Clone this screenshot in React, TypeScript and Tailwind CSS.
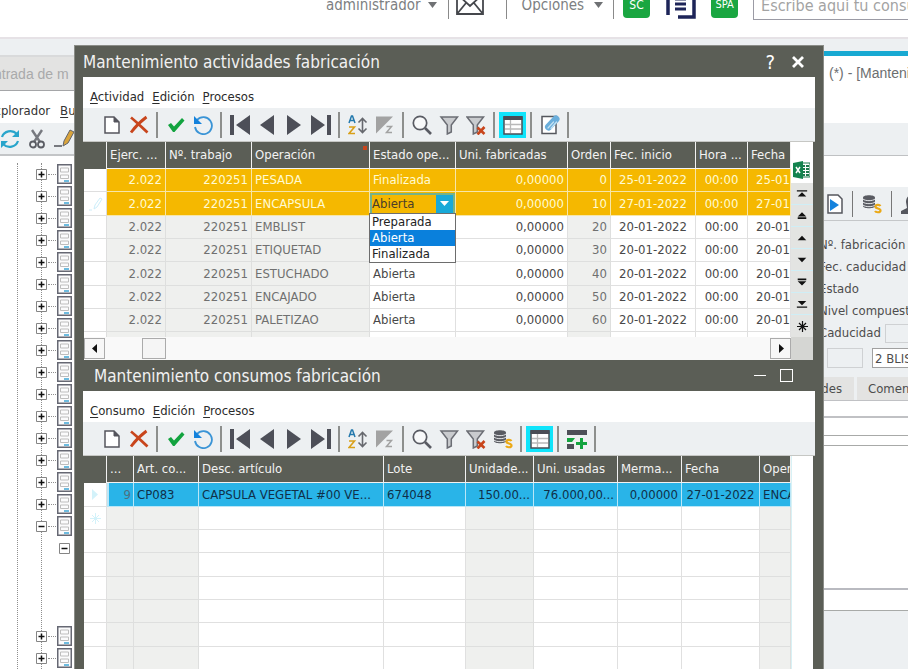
import type { ReactNode } from "react";

const UI = "font-['DejaVu_Sans_Condensed','DejaVu_Sans',sans-serif]";

/* ---------- icons ---------- */

function Svg({ children, w = 20, h = 20 }: { children: ReactNode; w?: number; h?: number }) {
  return (
    <svg width={w} height={h} viewBox={`0 0 ${w} ${h}`} fill="none" aria-hidden="true" className="shrink-0">
      {children}
    </svg>
  );
}

const icons = {
  nuevo: (
    <Svg>
      <path d="M3 2h9l5 5v11H3z" fill="#fff" stroke="#55555d" strokeWidth="1.500" />
      <path d="M12 2v5h5z" fill="#55555d" stroke="#55555d" />
    </Svg>
  ),
  borrar: (
    <Svg>
      <path d="M2 2.500c5 4 11 10 16.500 15M17.500 2C12 6 6 12 2 17.500" stroke="#c8451c" strokeWidth="2.800" />
    </Svg>
  ),
  aceptar: (
    <Svg>
      <path d="M2 10l3-2 3 3.500L16 3l2.500 2.500L8.500 17H7z" fill="#12a33f" />
    </Svg>
  ),
  deshacer: (
    <Svg>
      <path d="M4 5A8.500 8.500 0 1 1 2 12" stroke="#3a94d6" strokeWidth="1.800" />
      <path d="M1 1v8h8z" fill="#1482dc" />
    </Svg>
  ),
  primero: (
    <Svg>
      <path d="M0 0h4v20H0zM20 0v20L6 10z" fill="#4d4f58" />
    </Svg>
  ),
  anterior: (
    <Svg>
      <path d="M17 0v20L3 10z" fill="#4d4f58" />
    </Svg>
  ),
  siguiente: (
    <Svg>
      <path d="M3 0v20l14-10z" fill="#4d4f58" />
    </Svg>
  ),
  ultimo: (
    <Svg>
      <path d="M0 0v20l14-10zM16 0h4v20h-4z" fill="#4d4f58" />
    </Svg>
  ),
  ordenar: (
    <Svg>
      <path d="M1 8l2.500-7h1L7 8M2 5.500h4" stroke="#2479ad" strokeWidth="1.500" />
      <path d="M1 12h5.500L1 18.500h6" stroke="#d9a018" strokeWidth="1.600" />
      <path d="M14.500 4v13M10.500 7.500l4-4 4 4M10.500 13.500l4 4 4-4" stroke="#66686e" strokeWidth="1.600" />
    </Svg>
  ),
  sinOrden: (
    <Svg>
      <path d="M1 1.500h17L1 18.500z" fill="#a2a2a2" />
      <path d="M11.500 11.500h5l-5 6h5.500" stroke="#a2a2a2" strokeWidth="1.500" />
    </Svg>
  ),
  buscar: (
    <Svg>
      <circle cx="8" cy="8" r="6.700" fill="#f8f9fa" stroke="#595b63" strokeWidth="1.700" />
      <path d="M13 13l6 6" stroke="#595b63" strokeWidth="2.600" />
    </Svg>
  ),
  filtro: (
    <Svg>
      <path d="M2 2h16.500l-6.200 8v7l-4 2v-9z" fill="#c9cbce" stroke="#6b6d74" strokeWidth="1.500" />
    </Svg>
  ),
  quitarFiltro: (
    <Svg>
      <path d="M1 2h16.500l-6.200 8v7l-4 2v-9z" fill="#c9cbce" stroke="#6b6d74" strokeWidth="1.500" />
      <path d="M11.500 12.500l7 6.500M18.500 12l-7 7.500" stroke="#c8451c" strokeWidth="2.600" />
    </Svg>
  ),
  rejilla: (
    <Svg>
      <path d="M1 2h18v17H1z" fill="#fff" stroke="#4b4d55" strokeWidth="1.500" />
      <path d="M0.500 1h19v4h-19z" fill="#4b4d55" />
      <path d="M2 9.500h16M2 14h16M7.500 5v13" stroke="#b9b9b9" strokeWidth="1.300" />
    </Svg>
  ),
  adjuntar: (
    <Svg>
      <path d="M2 1.500h14v17H2z" fill="#fff" stroke="#55575e" strokeWidth="1.500" />
      <path d="M8.500 12L16 4" stroke="#6aaedb" strokeWidth="7" strokeLinecap="round" />
      <path d="M8 13l5.500-6M11 13.500L16.500 7" stroke="#c5e2f3" strokeWidth="1.200" strokeLinecap="round" />
    </Svg>
  ),
  costes: (
    <Svg>
      <path d="M1 3.500C1 0.500 13 0.500 13 3.500v8.500C13 15 1 15 1 12z" fill="#595b62" />
      <path d="M1 5c2 2.200 10 2.200 12 0M1 8c2 2.200 10 2.200 12 0M1 11c2 2.200 10 2.200 12 0" stroke="#e3e5e8" strokeWidth="1" />
      <path d="M18.500 12c-1-1.500-5-1.500-5 0.700 0 2.300 5 1.300 5 3.700 0 2.400-4.500 2.300-5.500 0.600" stroke="#eba916" strokeWidth="2.200" />
    </Svg>
  ),
  anadirFila: (
    <Svg>
      <path d="M0 1h20v5H0zM0 15h7v5H0z" fill="#4d4f58" />
      <path d="M0 9h8l-3 4H0zM9 13h4V9h3v4h4v3h-4v4h-3v-4H9z" fill="#12a33f" />
    </Svg>
  ),
};

type IconName = keyof typeof icons;

/* ---------- toolbar ---------- */

function Toolbar({ items, label }: { items: (IconName | "|")[]; label: string }) {
  return (
    <div role="toolbar" aria-label={label} className="flex h-[33px] items-center bg-[#edf0f2] pl-[15px]">
      {items.map((it, i) =>
        it === "|" ? (
          <span key={i} className="mx-1 h-[26px] w-0.5 bg-[#8d8f8d]" />
        ) : it === "rejilla" ? (
          <button key={i} aria-label={it} className="flex h-[26px] w-[27px] items-center justify-center bg-[#0fe4fb]">
            {icons[it]}
          </button>
        ) : (
          <button key={i} aria-label={it} className="flex h-[26px] w-[27px] items-center justify-center">
            {icons[it]}
          </button>
        ),
      )}
    </div>
  );
}

function MenuBar({ items }: { items: string[] }) {
  return (
    <nav className="flex h-[31px] items-center gap-2 bg-white pt-2 pl-[7px] text-[13px] text-[#2b2b2b]">
      {items.map((m) => (
        <button key={m} className="leading-4">
          <span className="underline underline-offset-2">{m[0]}</span>
          {m.slice(1)}
        </button>
      ))}
    </nav>
  );
}

/* ---------- activities grid ---------- */

type Row = [string, string, string, string, string, string, string, string, string];

const actividades: Row[] = [
  ["2.022", "220251", "PESADA", "Finalizada", "0,00000", "0", "25-01-2022", "00:00", "25-01"],
  ["2.022", "220251", "ENCAPSULA", "Abierta", "0,00000", "10", "27-01-2022", "00:00", "27-01"],
  ["2.022", "220251", "EMBLIST", "", "0,00000", "20", "20-01-2022", "00:00", "20-01"],
  ["2.022", "220251", "ETIQUETAD", "", "0,00000", "30", "20-01-2022", "00:00", "20-01"],
  ["2.022", "220251", "ESTUCHADO", "Abierta", "0,00000", "40", "20-01-2022", "00:00", "20-01"],
  ["2.022", "220251", "ENCAJADO", "Abierta", "0,00000", "50", "20-01-2022", "00:00", "20-01"],
  ["2.022", "220251", "PALETIZAO", "Abierta", "0,00000", "60", "20-01-2022", "00:00", "20-01"],
  ["", "", "", "", "", "", "", "", ""],
];

const colsA = [
  { t: "Ejerc. ...", w: "w-[59px]", a: "text-right pr-[3px]", ro: true },
  { t: "Nº. trabajo", w: "w-[86px]", a: "text-right pr-[3px]", ro: true },
  { t: "Operación", w: "w-[118px]", a: "text-left pl-[3px]", ro: true },
  { t: "Estado ope...", w: "w-[86px]", a: "text-left pl-[3px]", ro: false },
  { t: "Uni. fabricadas", w: "w-[112px]", a: "text-right pr-[3px]", ro: false },
  { t: "Orden", w: "w-[43px]", a: "text-right pr-[3px]", ro: true },
  { t: "Fec. inicio", w: "w-[85px]", a: "text-center", ro: false },
  { t: "Hora ...", w: "w-[52px]", a: "text-center", ro: false },
  { t: "Fecha", w: "", a: "text-left pl-2", ro: false },
];

function EstadoEditor() {
  return (
    <div className="relative flex h-[22px] w-[85px] items-stretch border-2 border-[#77b287] bg-[#f5b800]">
      <input aria-label="Estado operación" defaultValue="Abierta" className="min-w-0 flex-1 bg-transparent text-[13px] leading-4 text-[#4b3d2a] outline-none" />
      <button aria-label="Desplegar" className="flex w-[17px] items-center justify-center bg-[#18a9d8]">
        <svg width="9" height="5" viewBox="0 0 9 5" aria-hidden="true">
          <path d="M0 0h9L4.500 5z" fill="#fff" />
        </svg>
      </button>
      <ul role="listbox" className="absolute top-full -left-[3px] z-10 w-[87px] border border-[#6d6d6d] bg-white leading-4 text-[#222]">
        <li role="option" aria-selected="false" className="h-4 pl-0.5">Preparada</li>
        <li role="option" aria-selected="true" className="h-4 bg-[#0a80dc] pl-0.5 text-white">Abierta</li>
        <li role="option" aria-selected="false" className="h-4 pl-0.5">Finalizada</li>
      </ul>
    </div>
  );
}

function TablaActividades() {
  return (
    <table className="h-[214px] w-full table-fixed border-separate border-spacing-0 text-[13px] leading-4">
      <thead>
        <tr className="h-[27px] text-left text-[#f3f3f3]">
          <th aria-label="Marca" className="w-[23px] border-r border-[#f2f2f2] bg-[#5b5e56] p-0" />
          {colsA.map((c, i) => (
            <th key={i} className={`${c.w} relative overflow-hidden border-r border-b border-[#f2f2f2] bg-[#5b5e56] p-0 pl-[3px] font-normal whitespace-nowrap`}>
              {c.t}
              {c.t === "Operación" && <span className="absolute top-1 right-0.5 size-1 bg-[#c8451c]" />}
            </th>
          ))}
        </tr>
      </thead>
      <tbody>
        {actividades.map((r, ri) => (
          <tr key={ri} className={ri % 3 === 1 ? "h-6" : "h-[23px]"}>
            <td className="border-r border-b border-[#dedede] bg-white p-0">
              {ri === 1 && (
                <svg width="14" height="14" viewBox="0 0 14 14" fill="none" className="ml-[5px] block" aria-hidden="true">
                  <path d="M0 13h3M5 12l1-4 5-7 2 1-5 8z" stroke="#cdeefa" />
                </svg>
              )}
            </td>
            {colsA.map((c, ci) => {
              const tone =
                ri < 2
                  ? "border-[#f7e6a8] bg-[#f5b800] text-[#fffbd2]"
                  : c.ro
                    ? "border-[#dedfde] bg-[#eff0ee] text-[#707070]"
                    : "border-[#e0e0e0] bg-white text-[#484848]";
              const editing = ri === 1 && ci === 3;
              return (
                <td key={ci} className={`border-r border-b p-0 whitespace-nowrap ${tone} ${editing ? "" : `overflow-hidden ${c.a}`}`}>
                  {editing ? <EstadoEditor /> : r[ci]}
                </td>
              );
            })}
          </tr>
        ))}
      </tbody>
    </table>
  );
}

const navPaths = [
  "M1 2h12v1.500H1zM7 4.500l5 5H2z",
  "M7 2l5 5H2zM2 8h10v2H2z",
  "M7 4l5 5H2z",
  "M7 9l5-5H2z",
  "M7 10.500l5-5H2zM2 2.500h10v2H2z",
  "M7 8l5-5H2zM1 9.500h12V11H1z",
];

function BarraRegistros() {
  return (
    <div className="flex w-[22px] flex-col bg-white">
      <button aria-label="Exportar a Excel" className="flex h-[41px] items-end pb-1 pl-0.5">
        <svg width="17" height="18" viewBox="0 0 17 18" aria-hidden="true">
          <path d="M8 2h9v14H8z" fill="#fff" stroke="#1d7b4c" />
          <path d="M10 4h2v2h-2zm3 0h3v2h-3zm-3 3h2v2h-2zm3 0h3v2h-3zm-3 3h2v2h-2zm3 0h3v2h-3zm-3 3h2v2h-2zm3 0h3v2h-3z" fill="#1d7b4c" />
          <path d="M0 2l10-2v18L0 16z" fill="#14834e" />
          <path d="M3 6l4 6M7 6l-4 6" stroke="#fff" strokeWidth="1.500" />
        </svg>
      </button>
      {navPaths.map((d) => (
        <button key={d} aria-label="Mover registro" className="flex h-[22px] items-center justify-center border-b border-[#cfeef6] bg-[#e3e4e2]">
          <svg width="12" height="12" viewBox="0 0 14 13" aria-hidden="true">
            <path d={d} fill="#111" />
          </svg>
        </button>
      ))}
      <button aria-label="Nuevo registro" className="flex flex-1 items-center justify-center bg-[#e3e4e2]">
        <svg width="13" height="13" viewBox="0 0 13 13" fill="none" aria-hidden="true">
          <path d="M6.500 1v11M1 6.500h11M3 3l7 7M10 3l-7 7" stroke="#111" strokeWidth="1.200" />
        </svg>
      </button>
    </div>
  );
}

function ScrollHorizontal() {
  return (
    <div className="flex h-[23px] items-stretch bg-[#f9f9f9]">
      <button aria-label="Izquierda" className="my-px flex w-[21px] items-center justify-center border border-[#ababab] bg-[#f7f7f7]">
        <svg width="6" height="10" viewBox="0 0 6 10" aria-hidden="true">
          <path d="M5 0v9L0 4.500z" fill="#111" />
        </svg>
      </button>
      <div className="flex-1 py-px pl-[37px]">
        <div className="h-full w-6 border border-[#ababab] bg-[#f5f5f5]" />
      </div>
      <button aria-label="Derecha" className="my-px flex w-[21px] items-center justify-center border border-[#ababab] bg-[#f7f7f7]">
        <svg width="6" height="10" viewBox="0 0 6 10" aria-hidden="true">
          <path d="M1 0v9l5-4.500z" fill="#111" />
        </svg>
      </button>
      <div className="w-[22px] bg-[#d5d6d3]" />
    </div>
  );
}

/* ---------- consumption grid ---------- */

const colsC = [
  { t: "...", v: "9", w: "w-[27px]", a: "text-right pr-0.5", ro: true },
  { t: "Art. co...", v: "CP083", w: "w-[65px]", a: "text-left pl-[3px]", ro: true },
  { t: "Desc. artículo", v: "CAPSULA VEGETAL #00 VE...", w: "w-[185px]", a: "text-left pl-[3px]", ro: false },
  { t: "Lote", v: "674048", w: "w-[82px]", a: "text-left pl-[3px]", ro: false },
  { t: "Unidade...", v: "150.00...", w: "w-[68px]", a: "text-right pr-[3px]", ro: true },
  { t: "Uni. usadas", v: "76.000,00...", w: "w-[84px]", a: "text-right pr-[3px]", ro: false },
  { t: "Merma...", v: "0,00000", w: "w-[64px]", a: "text-right pr-[3px]", ro: false },
  { t: "Fecha", v: "27-01-2022", w: "w-[78px]", a: "text-center", ro: false },
  { t: "Oper", v: "ENCA", w: "", a: "text-left pl-[3px]", ro: true },
];

function TablaConsumos() {
  return (
    <table className="w-full table-fixed border-separate border-spacing-0 text-[13px] leading-4">
      <thead>
        <tr className="h-[27px] text-left text-[#f3f3f3]">
          <th aria-label="Marca" className="w-[23px] border-r border-[#f2f2f2] bg-[#5b5e56] p-0" />
          {colsC.map((c, i) => (
            <th key={i} className={`${c.w} overflow-hidden border-r border-b border-[#f2f2f2] bg-[#5b5e56] p-0 pl-[3px] font-normal whitespace-nowrap`}>
              {c.t}
            </th>
          ))}
        </tr>
      </thead>
      <tbody>
        {[0, 1, 2, 3, 4, 5, 6, 7, 8].map((ri) => (
          <tr key={ri} className={ri % 3 === 0 ? "h-6" : "h-[23px]"}>
            <td className="border-r border-b border-[#e0e0e0] bg-white p-0">
              {ri < 2 && (
                <svg width="13" height="13" viewBox="0 0 13 13" fill="none" className="ml-[5px] block" aria-hidden="true">
                  {ri === 0 ? (
                    <path d="M3 1v11l6-5.500z" fill="#d3f2fa" />
                  ) : (
                    <path d="M6.500 1v11M1 6.500h11M3 3l7 7M10 3l-7 7" stroke="#d3f2fa" />
                  )}
                </svg>
              )}
            </td>
            {colsC.map((c, ci) => (
              <td
                key={ci}
                className={`overflow-hidden border-r border-b p-0 whitespace-nowrap ${c.a} ${
                  ri === 0
                    ? ci === 0
                      ? "border-l-2 border-[#b9e6f7] bg-[#29b4e8] text-[#4f6f80]"
                      : "border-[#b9e6f7] bg-[#29b4e8] text-[#103048]"
                    : c.ro
                      ? "border-[#dedfde] bg-[#eff0ee]"
                      : "border-[#e0e0e0] bg-white"
                }`}
              >
                {ri === 0 ? c.v : ""}
              </td>
            ))}
          </tr>
        ))}
      </tbody>
    </table>
  );
}

/* ---------- dialog ---------- */

function Dialogo() {
  return (
    <div role="dialog" aria-label="Mantenimiento actividades fabricación" className="absolute top-[45px] right-[84px] bottom-0 left-[74px] flex flex-col overflow-hidden border border-b-0 border-[#8b8d88] bg-[#5b5e56] px-2">
      <header className="flex h-[31px] shrink-0 items-center justify-between pr-[10px]">
        <h1 className="text-[17px] leading-6 text-[#f1f1f1]">Mantenimiento actividades fabricación</h1>
        <div className="flex items-center gap-4 text-white">
          <button aria-label="Ayuda" className="text-[20px] leading-6">?</button>
          <button aria-label="Cerrar">
            <svg width="14" height="14" viewBox="0 0 14 14" aria-hidden="true">
              <path d="M2 2l10 10M12 2L2 12" stroke="#fff" strokeWidth="2.800" />
            </svg>
          </button>
        </div>
      </header>
      <MenuBar items={["Actividad", "Edición", "Procesos"]} />
      <Toolbar
        label="Actividades"
        items={["nuevo", "borrar", "|", "aceptar", "deshacer", "|", "primero", "anterior", "siguiente", "ultimo", "|", "ordenar", "sinOrden", "|", "buscar", "filtro", "quitarFiltro", "|", "rejilla", "|", "adjuntar", "|"]}
      />
      <div className="shrink-0 border-t border-[#c6c7c4] pr-0.5 pl-px">
        <div className="flex h-[195px] overflow-hidden">
          <div className="min-w-0 flex-1">
            <TablaActividades />
          </div>
          <BarraRegistros />
        </div>
        <ScrollHorizontal />
      </div>

      <header className="flex h-[31px] shrink-0 items-center justify-between pr-[22px] pl-[11px]">
        <h2 className="text-[17px] leading-6 text-[#f1f1f1]">Mantenimiento consumos fabricación</h2>
        <div className="flex items-center gap-[14px]">
          <button aria-label="Minimizar" className="h-px w-3 bg-white" />
          <button aria-label="Maximizar" className="size-[13px] border border-white" />
        </div>
      </header>
      <MenuBar items={["Consumo", "Edición", "Procesos"]} />
      <Toolbar
        label="Consumos"
        items={["nuevo", "borrar", "|", "aceptar", "deshacer", "|", "primero", "anterior", "siguiente", "ultimo", "|", "ordenar", "sinOrden", "|", "buscar", "filtro", "quitarFiltro", "costes", "|", "rejilla", "|", "anadirFila", "|"]}
      />
      <div className="flex min-h-0 flex-1 overflow-hidden border-t border-[#c6c7c4] pr-0.5 pl-px">
        <div className="min-w-0 flex-1">
          <TablaConsumos />
        </div>
        <div className="w-[22px] border-l border-[#d8f1f5] bg-white" />
      </div>
    </div>
  );
}

/* ---------- application behind the dialog ---------- */

function Cabecera() {
  return (
    <div className="h-[39px] shrink-0 overflow-hidden border-b-2 border-[#e6e2e6] bg-white">
      <div className="-mt-[31px] flex h-[72px] items-center pl-[326px] text-[15px] text-[#7d7f82]">
        <button className="flex items-center gap-[7px]">
          administrador
          <svg width="9" height="6" viewBox="0 0 9 6" aria-hidden="true"><path d="M0 0h9L4.500 6z" fill="#6f7174" /></svg>
        </button>
        <span className="ml-[11px] h-7 w-px bg-[#8a8a8a]" />
        <button aria-label="Correo" className="ml-[7px] w-[42px]">
          <svg width="42" height="24" viewBox="0 0 42 24" fill="none" aria-hidden="true">
            <path d="M1 1h26v20H1zM1 1l13 12L27 1M1 21l9-11M27 21L18 10" stroke="#45474c" strokeWidth="1.800" />
            <path d="M19 0h22v7H19z" fill="#d1432a" />
          </svg>
        </button>
        <span className="ml-2 h-7 w-px bg-[#8a8a8a]" />
        <button className="ml-[15px] flex items-center gap-[10px]">
          Opciones
          <svg width="9" height="6" viewBox="0 0 9 6" aria-hidden="true"><path d="M0 0h9L4.500 6z" fill="#6f7174" /></svg>
        </button>
        <span className="ml-[10px] h-7 w-px bg-[#8a8a8a]" />
        <button className="ml-[9px] h-[26px] w-[27px] rounded-sm bg-[#1aa641] text-[12px] text-white">SC</button>
        <button aria-label="Empresa" className="ml-4">
          <svg width="30" height="28" viewBox="0 0 30 28" fill="none" aria-hidden="true">
            <path d="M2 24V2h8M12 26h16V2H18" stroke="#1d2458" strokeWidth="3.500" />
            <path d="M9 8h11M9 13h11M9 18h11" stroke="#1d2458" strokeWidth="3" />
          </svg>
        </button>
        <button className="ml-[15px] h-[26px] w-[27px] rounded-sm bg-[#1aa641] text-[11px] text-white">SPA</button>
        <input aria-label="Consulta" placeholder="Escribe aquí tu consulta" className="ml-[15px] h-[30px] min-w-0 flex-1 border border-r-0 border-[#9b9ba5] pl-[7px] text-[16px] placeholder:text-[#a3a3a3]" />
      </div>
    </div>
  );
}

function IconoDoc() {
  return (
    <svg width="15" height="20" viewBox="0 0 15 20" fill="none" className="shrink-0" aria-hidden="true">
      <path d="M0.750 0.750h13.500v18.500H0.750z" fill="#fbfbfc" stroke="#666873" strokeWidth="1.500" />
      <path d="M3.500 4h8v4h-8zM3.500 11h8v3.500h-8z" stroke="#bdbdbd" />
      <path d="M7 17h5" stroke="#3ea6d6" strokeWidth="1.500" />
    </svg>
  );
}

function Caja({ abierto }: { abierto?: boolean }) {
  return (
    <svg width="11" height="11" viewBox="0 0 11 11" fill="none" className="shrink-0" aria-hidden="true">
      <path d="M0.500 0.500h10v10H0.500z" fill="#fff" stroke="#858585" />
      <path d={abierto ? "M2.500 5.500h6" : "M2.500 5.500h6M5.500 2.500v6"} stroke="#111" strokeWidth="1.500" />
    </svg>
  );
}

const arbol = [..."++++++++++++++++-c   ++"];

function Explorador() {
  return (
    <aside className="flex w-[74px] shrink-0 flex-col overflow-hidden border-t-2 border-[#d9dadb] bg-white">
      <div className="h-[34px] shrink-0 border-b border-[#a5a6a8] bg-[#e3e3e2] pt-[9px] font-['Liberation_Sans',sans-serif] text-[14px] leading-4 whitespace-nowrap text-[#a9aaab]">
        <span className="-ml-[6px]">ntrada de m</span>
      </div>
      <nav className="-ml-[6px] flex h-8 shrink-0 items-center gap-[10px] pt-2 text-[13px] text-[#333]">
        <button>xplorador</button>
        <button><span className="underline underline-offset-2">B</span>u</button>
      </nav>
      <div className="flex h-[33px] shrink-0 items-center gap-[9px] border-b-2 border-[#c3c5c7] bg-[#edf0f2]">
        <button aria-label="Actualizar">
          <Svg>
            <path d="M2 8C4 2 12 0 17 5M18 12c-2 6-10 8-15 3" stroke="#29a5cb" strokeWidth="2.200" />
            <path d="M19 1v7h-7zM1 19v-7h7z" fill="#29a5cb" />
          </Svg>
        </button>
        <button aria-label="Cortar">
          <Svg w={16}>
            <path d="M3 1l8 12M13 1L5 13" stroke="#77797f" strokeWidth="2.400" />
            <circle cx="4" cy="15.500" r="3" stroke="#5b5d64" strokeWidth="1.800" />
            <circle cx="12" cy="15.500" r="3" stroke="#5b5d64" strokeWidth="1.800" />
          </Svg>
        </button>
        <button aria-label="Editar">
          <Svg>
            <path d="M0 17h8" stroke="#77797f" strokeWidth="2" />
            <path d="M9 17l1-5 6-11 4 2-6 11z" fill="#d9a43c" stroke="#62646b" />
          </Svg>
        </button>
      </div>
      <div className="flex flex-1 pt-[7px]">
        <div className="w-[18px] shrink-0 border-r border-dotted border-[#8e8e8e]" />
        <ul className="relative flex-1 pl-[18px]">
          <li aria-hidden="true" className="absolute inset-y-0 left-[23px] border-l border-dotted border-[#8e8e8e]" />
          {arbol.map((n, i) => (
            <li key={i} className="relative flex h-[22px] items-center">
              {n === "c" && <span className="ml-[23px] flex items-center"><Caja abierto /></span>}
              {(n === "+" || n === "-") && (
                <>
                  <Caja abierto={n === "-"} />
                  <span className="mx-px w-2 border-t border-dotted border-[#8e8e8e]" />
                  <IconoDoc />
                </>
              )}
            </li>
          ))}
        </ul>
      </div>
    </aside>
  );
}

function PanelFicha() {
  return (
    <section className="mt-3 flex w-[90px] shrink-0 flex-col overflow-hidden bg-white whitespace-nowrap">
      <div className="h-[72px] shrink-0 border-t-[5px] border-[#18a9d2] pt-[9px] pl-[11px] font-['Liberation_Sans',sans-serif] text-[14px] leading-4 text-[#6c6e70]">
        (*) - [Mantenimiento]
      </div>
      <div className="h-[33px] shrink-0 border-b border-[#bfc1c3] bg-[#edf0f2]" />
      <div className="h-[31px] shrink-0" />
      <div className="h-[213px] shrink-0 bg-[#edf0f2] text-[13px] text-[#4d4d4d]">
        <div className="flex h-[34px] items-center gap-[9px] border-b border-[#c5c7c9] pl-[9px]">
          <button aria-label="Ejecutar" className="shrink-0">
            <Svg w={16}>
              <path d="M1 1h10l4 4v14H1z" fill="#fff" stroke="#55575e" strokeWidth="1.500" />
              <path d="M3 5l9 6-9 6z" fill="#1482dc" />
            </Svg>
          </button>
          <span className="h-[26px] w-px shrink-0 bg-[#777]" />
          <button aria-label="Costes" className="shrink-0">{icons.costes}</button>
          <span className="h-[26px] w-px shrink-0 bg-[#777]" />
          <button aria-label="Usuario" className="shrink-0">
            <Svg>
              <path d="M5 8c0-9 10-9 10 0 0 3-1 5-2 6l7 3v3H0v-3l6-3z" fill="#55575e" />
            </Svg>
          </button>
        </div>
        <div className="pt-[13px] pl-px leading-[22px]">
          <div>Nº. fabricación</div>
          <div>Fec. caducidad</div>
          <div>Estado</div>
          <div>Nivel compuesto</div>
          <label className="flex items-center gap-1">
            Caducidad
            <input className="h-[19px] w-10 border border-[#cfd1d3] bg-[#edf0f2]" />
          </label>
        </div>
        <div className="flex h-[28px] items-center gap-[9px] pl-[9px]">
          <input aria-label="Cantidad" className="h-5 w-9 shrink-0 border border-[#cfd1d3] bg-[#edf0f2]" />
          <input aria-label="Descripción" defaultValue="2 BLISTER" className="h-5 w-24 shrink-0 border border-[#a0a0a0] bg-white pl-0.5" />
        </div>
        <div className="mt-[5px] flex h-[23px] gap-[3px]">
          <button className="w-9 shrink-0 bg-[#e3e3e2] pr-3 text-right">des</button>
          <button className="shrink-0 bg-[#e3e3e2] px-[11px]">Comentarios</button>
        </div>
      </div>
      <div className="h-[18px] shrink-0 border-t border-b-2 border-[#c0c1c4]" />
      <div className="h-[18px] shrink-0 border-b border-[#a8aaa8]" />
      <div className="h-[10px] shrink-0 border-b border-[#a8aaa8]" />
      <div className="h-[144px] shrink-0 border-b-2 border-[#b9bac0]" />
      <div className="h-[21px] shrink-0 border-b border-[#a8aaa8]" />
      <div className="flex-1 bg-[#edf0f2]" />
    </section>
  );
}

export default function App() {
  return (
    <div className={`${UI} relative flex h-screen flex-col overflow-hidden bg-[#edf0f2]`}>
      <Cabecera />
      <div className="flex min-h-0 flex-1 justify-between">
        <div className="flex min-h-0 pt-4">
          <Explorador />
        </div>
        <PanelFicha />
      </div>
      <Dialogo />
    </div>
  );
}
